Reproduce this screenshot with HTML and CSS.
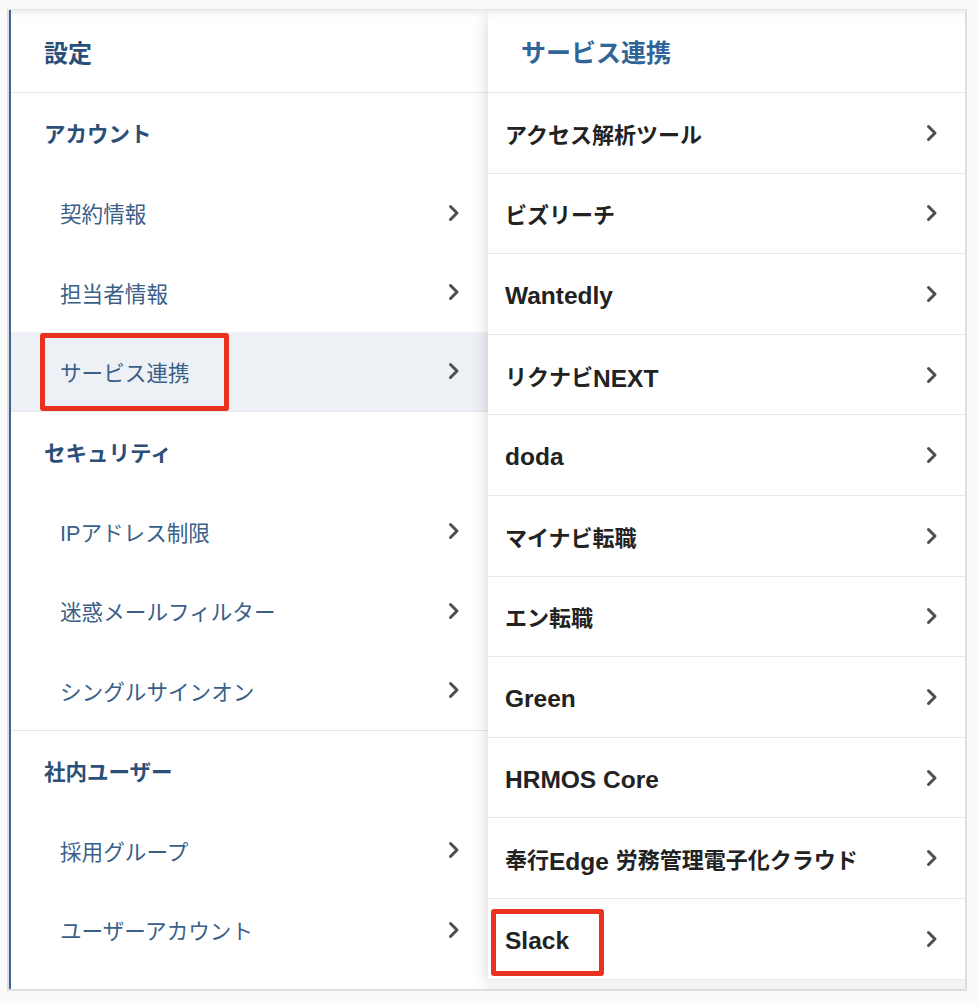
FILE: index.html
```html
<!DOCTYPE html>
<html lang="ja">
<head>
<meta charset="utf-8">
<title>設定</title>
<link rel="stylesheet" href="styles.css">
</head>
<body>
<div class="frame">
  <div class="panel left">
    <div class="head">設定</div>
    <div class="sec">アカウント</div>
    <div class="item">契約情報<svg class="chev" viewBox="0 0 12 18"><path d="M2.5 2.5 L9 9 L2.5 15.5"/></svg></div>
    <div class="item">担当者情報<svg class="chev" viewBox="0 0 12 18"><path d="M2.5 2.5 L9 9 L2.5 15.5"/></svg></div>
    <div class="item active">サービス連携<svg class="chev" viewBox="0 0 12 18"><path d="M2.5 2.5 L9 9 L2.5 15.5"/></svg><span class="mark mark-left"></span></div>
    <div class="sec">セキュリティ</div>
    <div class="item">IPアドレス制限<svg class="chev" viewBox="0 0 12 18"><path d="M2.5 2.5 L9 9 L2.5 15.5"/></svg></div>
    <div class="item">迷惑メールフィルター<svg class="chev" viewBox="0 0 12 18"><path d="M2.5 2.5 L9 9 L2.5 15.5"/></svg></div>
    <div class="item divided">シングルサインオン<svg class="chev" viewBox="0 0 12 18"><path d="M2.5 2.5 L9 9 L2.5 15.5"/></svg></div>
    <div class="sec">社内ユーザー</div>
    <div class="item">採用グループ<svg class="chev" viewBox="0 0 12 18"><path d="M2.5 2.5 L9 9 L2.5 15.5"/></svg></div>
    <div class="item">ユーザーアカウント<svg class="chev" viewBox="0 0 12 18"><path d="M2.5 2.5 L9 9 L2.5 15.5"/></svg></div>
  </div>
  <div class="panel right">
    <div class="head">サービス連携</div>
    <div class="ritem">アクセス解析ツール<svg class="chev" viewBox="0 0 12 18"><path d="M2.5 2.5 L9 9 L2.5 15.5"/></svg></div>
    <div class="ritem">ビズリーチ<svg class="chev" viewBox="0 0 12 18"><path d="M2.5 2.5 L9 9 L2.5 15.5"/></svg></div>
    <div class="ritem"><span class="en">Wantedly</span><svg class="chev" viewBox="0 0 12 18"><path d="M2.5 2.5 L9 9 L2.5 15.5"/></svg></div>
    <div class="ritem"><span>リクナビ<span class="en">NEXT</span></span><svg class="chev" viewBox="0 0 12 18"><path d="M2.5 2.5 L9 9 L2.5 15.5"/></svg></div>
    <div class="ritem"><span class="en">doda</span><svg class="chev" viewBox="0 0 12 18"><path d="M2.5 2.5 L9 9 L2.5 15.5"/></svg></div>
    <div class="ritem">マイナビ転職<svg class="chev" viewBox="0 0 12 18"><path d="M2.5 2.5 L9 9 L2.5 15.5"/></svg></div>
    <div class="ritem">エン転職<svg class="chev" viewBox="0 0 12 18"><path d="M2.5 2.5 L9 9 L2.5 15.5"/></svg></div>
    <div class="ritem"><span class="en">Green</span><svg class="chev" viewBox="0 0 12 18"><path d="M2.5 2.5 L9 9 L2.5 15.5"/></svg></div>
    <div class="ritem"><span class="en">HRMOS Core</span><svg class="chev" viewBox="0 0 12 18"><path d="M2.5 2.5 L9 9 L2.5 15.5"/></svg></div>
    <div class="ritem"><span>奉行<span class="en">Edge </span>労務管理電子化クラウド</span><svg class="chev" viewBox="0 0 12 18"><path d="M2.5 2.5 L9 9 L2.5 15.5"/></svg></div>
    <div class="ritem"><span class="en">Slack</span><svg class="chev" viewBox="0 0 12 18"><path d="M2.5 2.5 L9 9 L2.5 15.5"/></svg><span class="mark mark-right"></span></div>
    <div class="rfill"></div>
  </div>
</div>
</body>
</html>
```

FILE: styles.css
```css
html, body {
  margin: 0;
  padding: 0;
  background: #fafafa;
}
body {
  font-family: "Liberation Sans", "Noto Sans CJK JP", sans-serif;
  width: 978px;
  height: 1004px;
  overflow: hidden;
}
.frame {
  display: flex;
  margin: 9px 0 0 7px;
  width: 960px;
  height: 982px;
  box-sizing: border-box;
  border: 2px solid #dedede;
  border-top: 1px solid #e4e4e4;
  background: #fff;
  overflow: hidden;
}
.panel {
  display: flex;
  flex-direction: column;
  box-shadow: inset 0 9px 8px -8px rgba(0, 0, 0, 0.12);
}
.left {
  width: 477px;
  border-left: 2px solid #3e6593;
  flex: none;
}
.right {
  flex: 1;
  position: relative;
  z-index: 1;
  box-shadow: inset 0 9px 8px -8px rgba(0, 0, 0, 0.12), -8px 0 14px -6px rgba(0, 0, 0, 0.14);
}
.head {
  height: 82px;
  flex: none;
  border-bottom: 1px solid #e6e6e6;
  display: flex;
  align-items: center;
  padding-left: 33px;
  font-size: 24px;
  font-weight: bold;
  color: #2b4f78;
}
.right .head {
  color: #2f6597;
  font-size: 25px;
  padding-left: 33px;
}
.sec {
  height: 79.7px;
  flex: none;
  box-sizing: border-box;
  display: flex;
  align-items: center;
  padding-left: 33px;
  font-size: 21.5px;
  font-weight: bold;
  color: #2b4f78;
}
.item {
  position: relative;
  height: 79.7px;
  flex: none;
  box-sizing: border-box;
  display: flex;
  align-items: center;
  justify-content: space-between;
  padding-left: 49px;
  padding-right: 28px;
  font-size: 21.6px;
  color: #3a5f88;
}
.item.active {
  background: #edf1f5;
  border-bottom: 1px solid #e4e8ec;
}
.item.divided {
  border-bottom: 1px solid #e6e6e6;
}
.ritem {
  position: relative;
  height: 80.6px;
  flex: none;
  box-sizing: border-box;
  border-bottom: 1px solid #e8e8e8;
  display: flex;
  align-items: center;
  justify-content: space-between;
  padding-left: 17px;
  padding-right: 27px;
  font-size: 22px;
  font-weight: bold;
  color: #222;
}
.en {
  font-size: 24.5px;
  position: relative;
  top: 2px;
}
.rfill {
  flex: 1;
  background: #f4f4f4;
}
.chev {
  width: 12px;
  height: 18px;
  flex: none;
}
.chev path {
  fill: none;
  stroke: #4f4f4f;
  stroke-width: 3;
  stroke-linecap: round;
  stroke-linejoin: round;
}
.mark {
  position: absolute;
  box-sizing: border-box;
  border: 5px solid #e8321f;
  border-radius: 3px;
}
.mark-left {
  left: 29px;
  top: 1px;
  width: 189px;
  height: 78px;
}
.mark-right {
  left: 3px;
  top: 10px;
  width: 113px;
  height: 67px;
}
```
